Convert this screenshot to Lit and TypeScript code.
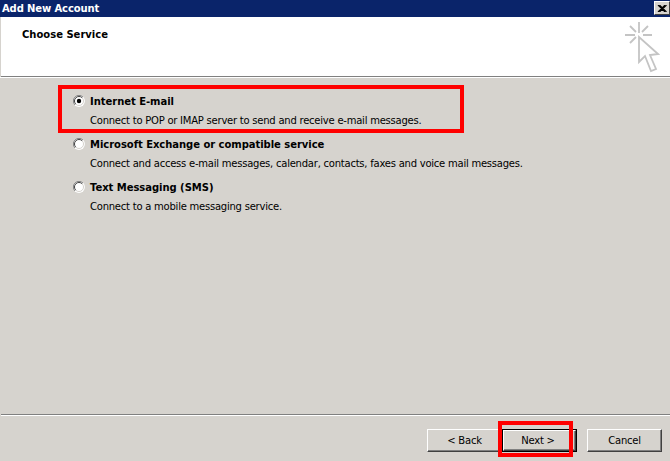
import { LitElement, html, svg, css } from "lit";
import { customElement } from "lit/decorators.js";

const options = [
  { title: "Internet E-mail", desc: "Connect to POP or IMAP server to send and receive e-mail messages.", checked: true },
  { title: "Microsoft Exchange or compatible service", desc: "Connect and access e-mail messages, calendar, contacts, faxes and voice mail messages.", checked: false },
  { title: "Text Messaging (SMS)", desc: "Connect to a mobile messaging service.", checked: false },
];

@customElement("app-root")
export class AppRoot extends LitElement {
  static styles = css`
    :host { display: block; width: 670px; height: 461px; }
    * { box-sizing: border-box; }
    .win {
      position: relative; width: 670px; height: 461px; overflow: hidden;
      background: #d6d3ce; display: flex; flex-direction: column;
      font-family: "DejaVu Sans", sans-serif; font-size: 10px; color: #000;
      letter-spacing: -0.23px;
    }
    .titlebar {
      height: 17px; flex: none; background: #0a246a; color: #fff;
      font-weight: 700; display: flex; align-items: center; letter-spacing: -0.12px;
      justify-content: space-between; padding: 0 0 1px 2px;
    }
    .close {
      width: 16px; height: 14px; background: #d6d3ce; display: flex; align-items: center; justify-content: center;
      border-top: 1px solid #fff; border-left: 1px solid #fff;
      border-right: 1px solid #404040; border-bottom: 1px solid #404040;
    }
    .header {
      height: 60px; flex: none; background: #fff; margin-left: 1px;
      border-bottom: 1px solid #808080; display: flex; justify-content: space-between;
      padding: 12px 10px 0 21px; font-weight: 700; letter-spacing: 0;
    }
    .icon { margin-top: -8px; display: block; }
    .header-rule { height: 1px; flex: none; background: #fff; }
    .body { flex: 1; padding: 17px 0 0 73px; display: flex; flex-direction: column; gap: 11px; }
    .opt { display: grid; grid-template-columns: 12px 1fr; column-gap: 5px; row-gap: 4px; height: 32px; align-items: center; }
    .radio { width: 12px; height: 12px; display: block; align-self: start; }
    .t { font-weight: 700; line-height: 14px; height: 14px; white-space: nowrap; letter-spacing: -0.04px; }
    .d { grid-column: 2; line-height: 13px; white-space: nowrap; }
    .footer { flex: none; height: 47px; border-top: 1px solid #808080; box-shadow: inset 0 1px 0 #fff; margin-left: 1px;
      display: flex; justify-content: flex-end; padding: 14px 8px 0 0; }
    .btn {
      width: 75px; height: 23px; background: #d6d3ce; font: inherit; letter-spacing: inherit; color: #000; padding: 0;
      border: 1px solid; border-color: #fff #404040 #404040 #fff;
      box-shadow: inset -1px -1px 0 #808080;
    }
    .btn.def { outline: 1px solid #000; width: 73px; height: 21px; margin: 1px; padding-right: 3px; }
    .cancel { margin-left: 10px; }
    .mark { position: absolute; border: 4px solid #ff0000; pointer-events: none; }
    .m1 { left: 58px; top: 85px; width: 406px; height: 48px; }
    .m2 { left: 498px; top: 421px; width: 75px; height: 36px; }
  `;

  radio(on: boolean) {
    return html`<svg class="radio" viewBox="0 0 12 12">
      <circle cx="6" cy="6" r="5.9" fill="#fff" />
      <path d="M10 2A5.5 5.5 0 0 0 2 10" fill="none" stroke="#808080" />
      <path d="M9.2 2.8A4.5 4.5 0 0 0 2.8 9.2" fill="none" stroke="#404040" />
      <path d="M9.2 2.8A4.5 4.5 0 0 1 2.8 9.2" fill="none" stroke="#d6d3ce" />
      ${on ? svg`<circle cx="6" cy="6" r="2.2" fill="#000" />` : ""}
    </svg>`;
  }

  render() {
    return html`<div class="win">
      <div class="titlebar">
        <span>Add New Account</span>
        <div class="close">
          <svg width="10" height="7" viewBox="0 0 10 7"><path d="M1 0L8 7M2.5 0L9.5 7M8 0L1 7M9.5 0L2.5 7" stroke="#000" stroke-width="1.1" fill="none" /></svg>
        </div>
      </div>
      <div class="header">
        <span>Choose Service</span>
        <svg class="icon" width="36" height="52" viewBox="0 0 36 52">
          <g fill="none" stroke="#c4c4c4" stroke-width="1.8">
            <path d="M15 1V12M1 14H11M19 14H28M6 5L12 11M24 5L18 11M6 22L12 16" />
            <path d="M15 16V41L21 35L27 50L32 48L26 34L34 33Z" fill="#fff" />
          </g>
        </svg>
      </div>
      <div class="header-rule"></div>
      <div class="body">
        ${options.map((o) => html`<div class="opt">
          ${this.radio(o.checked)}
          <div class="t">${o.title}</div>
          <div class="d">${o.desc}</div>
        </div>`)}
      </div>
      <div class="footer">
        <button class="btn">&lt; Back</button>
        <button class="btn def">Next &gt;</button>
        <button class="btn cancel">Cancel</button>
      </div>
      <div class="mark m1"></div>
      <div class="mark m2"></div>
    </div>`;
  }
}
